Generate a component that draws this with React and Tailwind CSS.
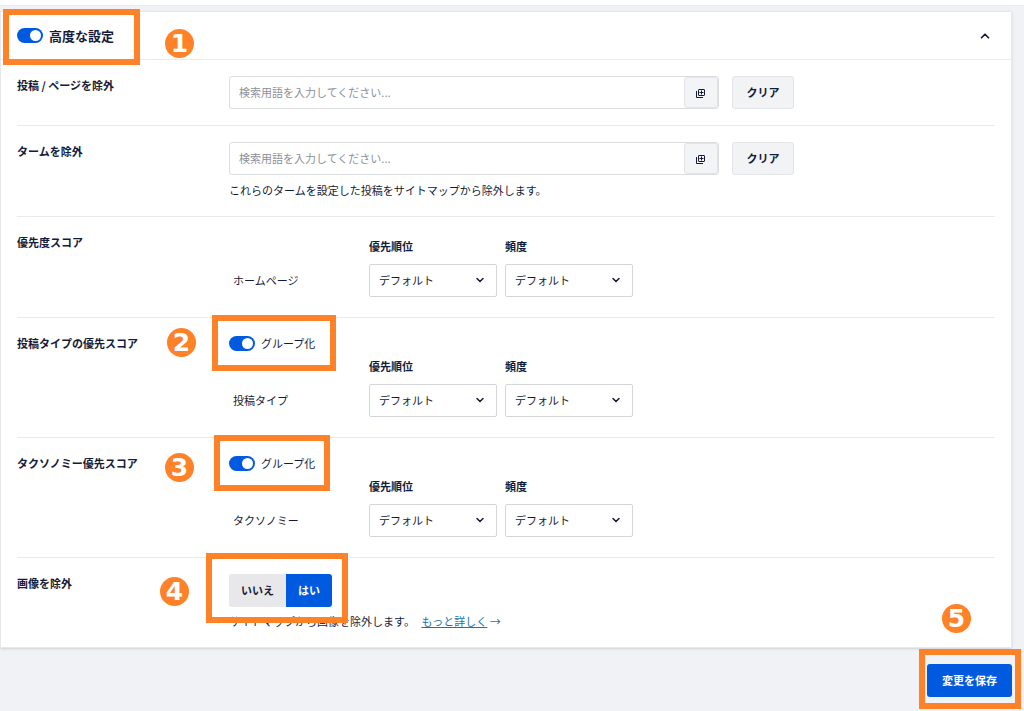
// App.jsx
import React, { useState } from "react";
import { ChevronDown, ChevronUp } from "lucide-react";

const Callout = ({ number, box, badge }) => (
  <>
    <span className={`pointer-events-none absolute z-10 border-6 border-[#ff8229] ${box}`} />
    <span
      className={`pointer-events-none absolute z-10 flex size-[29px] items-center justify-center rounded-full bg-[#ff8229] font-['DejaVu_Sans',sans-serif] text-[25px] leading-none font-bold text-white ${badge}`}
    >
      {number}
    </span>
  </>
);

const AddListIcon = () => (
  <svg width="10" height="10" viewBox="0 0 10 10" fill="none" stroke="currentColor" aria-hidden="true">
    <rect x="2.5" y="1.5" width="6" height="6" rx="0.5" />
    <path d="M5.5 2.5v4M3.5 4.5h4" />
    <path d="M0.5 3v6.5H7" />
  </svg>
);

const Toggle = ({ id, checked, onChange }) => (
  <input
    id={id}
    type="checkbox"
    role="switch"
    checked={checked}
    onChange={(e) => onChange(e.target.checked)}
    className="h-[15px] w-[26px] shrink-0 cursor-pointer appearance-none rounded-full bg-gray-400 p-[2px] before:block before:size-[11px] before:rounded-full before:bg-white checked:bg-[#005ae0] checked:before:ml-[11px]"
  />
);

const Row = ({ title, children }) => (
  <div className="flex border-b border-[#ebebed] py-4 last:border-b-0">
    <h3 className="w-[212px] shrink-0 leading-[19px] font-bold">{title}</h3>
    <div className="min-w-0 flex-1">{children}</div>
  </div>
);

const SearchField = ({ label }) => {
  const [value, setValue] = useState("");
  return (
    <div className="flex gap-[13px]">
      <div className="flex h-[33px] w-[490px] min-w-0 rounded-[3px] border border-[#dcdde1] bg-white">
        <input
          type="text"
          aria-label={label}
          value={value}
          onChange={(e) => setValue(e.target.value)}
          placeholder="検索用語を入力してください..."
          className="min-w-0 flex-1 px-[9px] outline-none placeholder:text-[#8c8f9a]"
        />
        <button
          type="button"
          aria-label="一覧から追加"
          className="flex w-[34px] items-center justify-center rounded-[3px] border border-[#e3e4e7] bg-[#f3f4f6]"
        >
          <AddListIcon />
        </button>
      </div>
      <button
        type="button"
        onClick={() => setValue("")}
        className="h-[33px] w-[62px] shrink-0 rounded-[3px] border border-[#e3e4e7] bg-[#f2f3f5] font-bold"
      >
        クリア
      </button>
    </div>
  );
};

const DefaultSelect = ({ label }) => (
  <div className="relative">
    <select
      aria-label={label}
      className="block h-[33px] w-full appearance-none rounded-[2px] border border-[#d5d6db] bg-white px-[9px] outline-none"
    >
      <option>デフォルト</option>
    </select>
    <ChevronDown
      size={12}
      strokeWidth={3}
      className="pointer-events-none absolute top-[10px] right-[11px]"
    />
  </div>
);

const ScoreTable = ({ name }) => (
  <table className="w-[408px] table-fixed">
    <thead>
      <tr>
        <td className="p-1"></td>
        <th className="p-1 text-left leading-[19px] font-bold">優先順位</th>
        <th className="p-1 text-left leading-[19px] font-bold">頻度</th>
      </tr>
    </thead>
    <tbody>
      <tr>
        <th className="p-1 text-left font-normal">{name}</th>
        <td className="p-1">
          <DefaultSelect label={`${name} 優先順位`} />
        </td>
        <td className="p-1">
          <DefaultSelect label={`${name} 頻度`} />
        </td>
      </tr>
    </tbody>
  </table>
);

const GroupToggle = ({ id, children }) => {
  const [grouped, setGrouped] = useState(true);
  return (
    <div className="relative flex h-[19px] w-fit items-center gap-[6px]">
      <Toggle id={id} checked={grouped} onChange={setGrouped} />
      <label htmlFor={id}>グループ化</label>
      {children}
    </div>
  );
};

const Choice = ({ value, selected, onSelect, className, children }) => (
  <label
    className={`relative flex items-center justify-center bg-[#e8e8eb] has-checked:bg-[#005ae0] has-checked:text-white ${className}`}
  >
    <input
      type="radio"
      name="exclude-images"
      value={value}
      checked={selected === value}
      onChange={() => onSelect(value)}
      className="absolute inset-0 cursor-pointer appearance-none"
    />
    {children}
  </label>
);

export default function App() {
  const [advanced, setAdvanced] = useState(true);
  const [excludeImages, setExcludeImages] = useState("yes");

  return (
    <div className="min-h-screen bg-[#f1f2f5] pr-3 font-['Noto_Sans_CJK_JP',sans-serif] text-[11px] text-[#141b38]">
      <div className="-mr-3 h-[6px] border-b border-[#e8eaec] bg-white" />

      <main className="mt-[5px] border border-[#e8e8eb] bg-white shadow-sm">
        <header className="flex h-12 items-center justify-between border-b border-[#ebebed] px-4">
          <div className="relative flex items-center gap-[6px]">
            <Toggle id="advanced" checked={advanced} onChange={setAdvanced} />
            <label htmlFor="advanced" className="text-[13px] leading-5 font-bold">
              高度な設定
            </label>
            <Callout
              number={1}
              box="-top-[17px] -left-[14px] h-[56px] w-[137px]"
              badge="top-[3px] left-[148px]"
            />
          </div>
          <button type="button" aria-label="閉じる" className="p-[3px]">
            <ChevronUp size={14} strokeWidth={3} />
          </button>
        </header>

        <div className="px-4">
          <Row title="投稿 / ページを除外">
            <SearchField label="投稿 / ページを除外" />
          </Row>

          <Row title="タームを除外">
            <SearchField label="タームを除外" />
            <p className="mt-[5px] leading-5">
              これらのタームを設定した投稿をサイトマップから除外します。
            </p>
          </Row>

          <Row title="優先度スコア">
            <ScoreTable name="ホームページ" />
          </Row>

          <Row title="投稿タイプの優先スコア">
            <GroupToggle id="group-post-types">
              <Callout
                number={2}
                box="-top-[19px] -left-[17px] h-[56px] w-[124px]"
                badge="-top-[6px] -left-[62px]"
              />
            </GroupToggle>
            <ScoreTable name="投稿タイプ" />
          </Row>

          <Row title="タクソノミー優先スコア">
            <GroupToggle id="group-taxonomies">
              <Callout
                number={3}
                box="-top-[19px] -left-[15px] h-[56px] w-[116px]"
                badge="-top-[1px] -left-[64px]"
              />
            </GroupToggle>
            <ScoreTable name="タクソノミー" />
          </Row>

          <Row title="画像を除外">
            <div
              role="radiogroup"
              aria-label="画像を除外"
              className="relative flex h-[33px] w-fit font-bold"
            >
              <Choice
                value="no"
                selected={excludeImages}
                onSelect={setExcludeImages}
                className="w-[57px] rounded-l-[3px]"
              >
                いいえ
              </Choice>
              <Choice
                value="yes"
                selected={excludeImages}
                onSelect={setExcludeImages}
                className="w-[46px] rounded-r-[3px]"
              >
                はい
              </Choice>
              <Callout
                number={4}
                box="-top-[21px] -left-[23px] h-[70px] w-[142px]"
                badge="top-[3px] -left-[69px]"
              />
            </div>
            <p className="mt-1 leading-5">
              サイトマップから画像を除外します。{" "}
              <a href="#more" className="ml-1 text-[#2271b1] underline">
                もっと詳しく
              </a>{" "}
              <a href="#more" aria-label="もっと詳しく" className="text-[#2271b1]">→</a>
            </p>
          </Row>
        </div>
      </main>

      <footer className="flex justify-end py-4">
        <div className="relative">
          <button
            type="button"
            className="block h-[33px] w-[85px] rounded-[3px] bg-[#005ae0] font-bold text-white"
          >
            変更を保存
          </button>
          <Callout
            number={5}
            box="-top-[15px] -left-2 h-[60px] w-[102px]"
            badge="-top-[60px] left-[15px]"
          />
        </div>
      </footer>
    </div>
  );
}
